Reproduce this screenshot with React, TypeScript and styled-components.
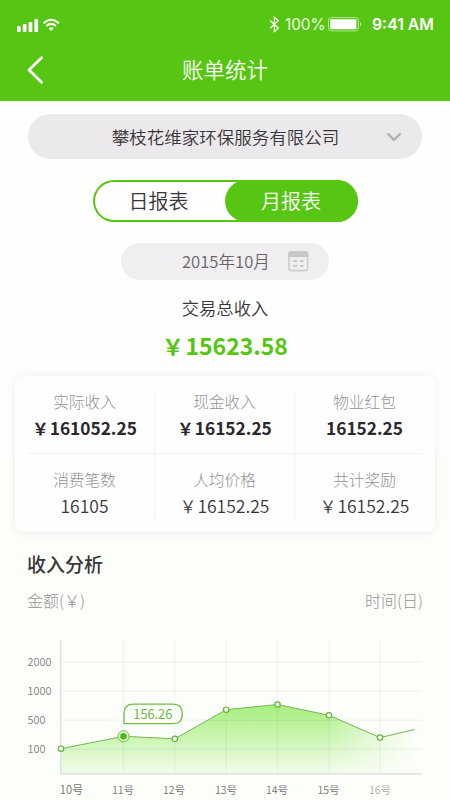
import React from "react";
import styled, { createGlobalStyle } from "styled-components";

const GREEN = "#56c612";
const CJK = '"Noto Sans CJK SC", "Noto Sans", sans-serif';

const GlobalStyle = createGlobalStyle`
  * { box-sizing: border-box; }
  body { margin: 0; background: #fefefe; }
`;

const Screen = styled.main`
  width: 450px;
  height: 800px;
  overflow: hidden;
  font-family: ${CJK};
  color: #39363a;
  background: linear-gradient(#fefefe 454px, #fcfef9 454px);
`;

const Header = styled.header`
  height: 101px;
  background: ${GREEN};
  color: #fff;
`;

const StatusBar = styled.div`
  display: flex;
  align-items: center;
  justify-content: space-between;
  height: 49px;
  padding: 0 15px 0 17px;
`;

const StatusGroup = styled.div`
  display: flex;
  align-items: center;
  font-family: Inter, "Liberation Sans", sans-serif;
`;

const Percent = styled.span`
  margin: 1px 3px 0 5px;
  width: 40px;
  font-size: 15.4px;
  line-height: 20px;
  letter-spacing: -0.1px;
  white-space: nowrap;
  color: #effbe8;
`;

const Clock = styled.span`
  margin: 1px 0 0 10px;
  width: 63px;
  font-size: 15.8px;
  font-weight: 600;
  line-height: 20px;
  white-space: nowrap;
`;

const NavBar = styled.div`
  display: grid;
  grid-template-columns: 60px 1fr 60px;
  align-items: center;
  height: 42px;
`;

const BackButton = styled.button`
  display: flex;
  padding: 0 0 0 26px;
  border: 0;
  background: none;
  color: #fff;
`;

const Title = styled.h1`
  margin: 0;
  font-size: 21.5px;
  font-weight: 350;
  line-height: 38px;
  text-align: center;
  padding-bottom: 2px;
`;

const Filters = styled.section`
  display: flex;
  flex-direction: column;
  align-items: center;
  padding-top: 13px;
`;

const CompanySelect = styled.div`
  display: grid;
  grid-template-columns: 56px 1fr 56px;
  align-items: center;
  justify-items: center;
  width: 394px;
  height: 45px;
  border-radius: 23px;
  background: #ebe9eb;
  font-size: 17.5px;
  font-weight: 350;
  line-height: 44px;
`;

const Company = styled.span`
  grid-column: 2;
  padding-left: 1px;
`;

const Segmented = styled.div`
  display: flex;
  width: 265px;
  height: 42px;
  margin-top: 21px;
  border-radius: 21px;
  box-shadow: inset 0 0 0 2px ${GREEN};
`;

const Segment = styled.button<{ $active?: boolean }>`
  width: ${(p) => (p.$active ? "133px" : "132px")};
  height: 42px;
  padding: 0;
  border: 0;
  border-radius: 21px;
  background: ${(p) => (p.$active ? GREEN : "transparent")};
  color: ${(p) => (p.$active ? "#fff" : "#39363a")};
  font: 350 20px/42px ${CJK};
`;

const MonthPicker = styled.div`
  display: flex;
  align-items: center;
  justify-content: space-between;
  width: 208px;
  height: 37px;
  margin-top: 21px;
  padding: 0 20px 0 61px;
  border-radius: 19px;
  background: #f0eef0;
  color: #69666a;
  font-size: 16.6px;
  font-weight: 350;
  line-height: 34px;

  span { padding-bottom: 2px; }
`;

const Total = styled.section`
  text-align: center;
`;

const TotalLabel = styled.div`
  padding-top: 13px;
  font-size: 17.3px;
  font-weight: 350;
  line-height: 30px;
`;

const TotalAmount = styled.div`
  height: 53px;
  color: ${GREEN};
  font-size: 23px;
  font-weight: 700;
  line-height: 45px;
`;

const Yen = styled.span`
  margin-right: 0.07em;
  font-size: 0.95em;
`;

const StatsCard = styled.section`
  width: 420px;
  height: 156px;
  margin: 0 15px;
  border-radius: 8px;
  background: #fefefe;
  box-shadow: 0 0 8px rgba(90, 50, 110, 0.09);
`;

const StatsRow = styled.div<{ $strong?: boolean }>`
  display: grid;
  grid-template-columns: repeat(3, 140px);
  height: 77px;
  padding: ${(p) => (p.$strong ? "16px 0 0" : "0 0 16px")};
`;

const Divider = styled.hr`
  height: 1px;
  margin: 0 14px;
  border: 0;
  background: #f3f2f3;
`;

const Stat = styled.div<{ $strong?: boolean }>`
  display: flex;
  flex-direction: column;
  align-items: center;
  padding: ${(p) => (p.$strong ? "1px 1px 0 0" : "17px 1px 0 0")};
  font-size: ${(p) => (p.$strong ? "17.3px" : "17.5px")};
  font-weight: ${(p) => (p.$strong ? 700 : 350)};
  color: ${(p) => (p.$strong ? "#2b282c" : "#39363a")};
  line-height: 26px;
  white-space: nowrap;
  box-shadow: inset -1px 0 0 #f5f4f5;
  &:last-child { box-shadow: none; }
`;

const StatLabel = styled.span`
  height: 24px;
  margin-top: -2px;
  color: #959296;
  font-size: 15.7px;
  font-weight: 300;
  line-height: 22px;
`;

const Analysis = styled.section`
  padding: 17px 27px 0;
`;

const SectionTitle = styled.h2`
  margin: 0;
  font-size: 19px;
  font-weight: 500;
  color: #39363a;
  line-height: 30px;
`;

const AxisTitles = styled.div`
  display: flex;
  justify-content: space-between;
  margin-top: 9px;
  color: #959296;
  font-size: 16px;
  font-weight: 300;
  line-height: 24px;
`;

const Chart = styled.svg`
  display: block;
  width: 450px;
  height: 172px;
  margin: 16px 0 0 -27px;
  font-family: ${CJK};
  font-weight: 350;
`;

const primaryStats = [
  { label: "实际收入", value: "161052.25", yen: true },
  { label: "现金收入", value: "16152.25", yen: true },
  { label: "物业红包", value: "16152.25", yen: false },
];

const secondaryStats = [
  { label: "消费笔数", value: "16105", yen: false },
  { label: "人均价格", value: "16152.25", yen: true },
  { label: "共计奖励", value: "16152.25", yen: true },
];

const yTicks = [
  { text: "2000", y: 34 },
  { text: "1000", y: 63 },
  { text: "500", y: 92 },
  { text: "100", y: 121 },
];

const points = [
  { day: "10号", x: 61, y: 120.7, label: 71.5 },
  { day: "11号", x: 123.5, y: 108.3, label: 123 },
  { day: "12号", x: 174.8, y: 110.8, label: 174 },
  { day: "13号", x: 226.2, y: 81.7, label: 226 },
  { day: "14号", x: 277.5, y: 76.5, label: 277 },
  { day: "15号", x: 329, y: 87.3, label: 328.5 },
  { day: "16号", x: 380, y: 109.6, label: 380 },
];

const line = points.map((p) => `${p.x},${p.y}`).join(" ") + " 414.5,101.5";

function SignalIcon() {
  return (
    <svg width="43" height="16" viewBox="0 0 43 16" fill="#fff">
      <rect x="0" y="9" width="3.7" height="6" rx="1" />
      <rect x="5.8" y="7" width="3.7" height="8" rx="1" />
      <rect x="11.6" y="5" width="3.7" height="10" rx="1" />
      <rect x="17.4" y="2" width="3.7" height="13" rx="1" />
      <g fill="none" stroke="#fff" strokeWidth="2">
        <path d="M26.6 6.3Q34.2-.8 41.8 6.3" />
        <path d="M29.4 9Q34.2 4.8 39 9" />
      </g>
      <path d="M31.7 11.2Q34.2 9.2 36.7 11.2L34.2 13.9Z" />
    </svg>
  );
}

function BluetoothIcon() {
  return (
    <svg width="11" height="17" viewBox="0 0 11 17" fill="none" stroke="#fff" strokeWidth="1.2">
      <path d="M1 4.5 9.3 12 5.3 15.6V1.2L9.3 4.8 1 12.2" />
    </svg>
  );
}

function BatteryIcon() {
  return (
    <svg width="34" height="15" viewBox="0 0 34 15">
      <rect x="0.5" y="0.5" width="30" height="13.4" rx="3" fill="none" stroke="#fff" strokeOpacity="0.55" />
      <rect x="2.2" y="2.3" width="26.3" height="10" rx="1.2" fill="#fff" />
      <path d="M32 5Q34.6 7.2 32 9.5Z" fill="#fff" fillOpacity="0.55" />
    </svg>
  );
}

function CalendarIcon() {
  return (
    <svg width="21" height="21" viewBox="0 0 21 21">
      <rect x="1" y="1" width="18.6" height="18.6" rx="2.5" fill="#f0eef0" stroke="#ceccce" strokeWidth="1.6" />
      <path d="M.2 6V3Q.2.2 3 .2H17.6Q20.4.2 20.4 3V6Z" fill="#c9c7c9" />
      <path d="M5.4 10.2H9M12 10.2H15.6M5.4 14.8H9M12 14.8H15.6" stroke="#c6c4c6" strokeWidth="1.8" />
    </svg>
  );
}

function IncomeChart() {
  return (
    <Chart viewBox="0 0 450 172">
      <defs>
        <linearGradient id="area" gradientUnits="userSpaceOnUse" x1="0" y1="76" x2="0" y2="146">
          <stop offset="0" stopColor="#a5ee7c" />
          <stop offset="1" stopColor="#a5ee7c" stopOpacity="0.1" />
        </linearGradient>
        <linearGradient id="fade" gradientUnits="userSpaceOnUse" x1="61" y1="0" x2="415" y2="0">
          <stop offset="0" stopColor="#fff" />
          <stop offset="0.75" stopColor="#fff" />
          <stop offset="1" stopColor="#fff" stopOpacity="0" />
        </linearGradient>
        <mask id="edge">
          <rect x="61" y="70" width="354" height="76" fill="url(#fade)" />
        </mask>
      </defs>
      <polygon points={`61,146 ${line} 414.5,146`} fill="url(#area)" mask="url(#edge)" />
      <g stroke="#786e82" strokeOpacity="0.065" strokeWidth="1.4">
        {yTicks.map((t) => (
          <path key={t.text} d={`M61 ${t.y + 0.3}H421.5`} />
        ))}
        {points.slice(1).map((p) => (
          <path key={p.day} d={`M${p.x} 12V146`} />
        ))}
      </g>
      <path d="M60.7 12V145.8H421.5" fill="none" stroke="#dedfdf" strokeWidth="1.5" />
      <polyline points={line} fill="none" stroke="#75b653" strokeWidth="1" />
      {points.map((p, i) =>
        i === 1 ? (
          <g key={p.day}>
            <circle cx={p.x} cy={p.y} r="5.6" fill="#e3f8d7" stroke="#67c338" strokeWidth="1" />
            <circle cx={p.x} cy={p.y} r="3.3" fill="#4fb51c" />
          </g>
        ) : (
          <circle key={p.day} cx={p.x} cy={p.y} r="2.7" fill="#f4fdec" stroke="#68b23d" strokeWidth="1.2" />
        ),
      )}
      <path
        d="M124 95.7V85.5Q124 76.2 133.5 76.2H173Q182.3 76.2 182.3 86T173 95.7Z"
        fill="#fcfef9"
        stroke="#70bd48"
        strokeWidth="1.3"
      />
      <text x="152.8" y="90.8" textAnchor="middle" fontSize="12.9" fill="#5fb12e">156.26</text>
      <g fontSize="10.9" fill="#858386">
        {yTicks.map((t) => (
          <text key={t.text} x="27.5" y={t.y + 4.3}>{t.text}</text>
        ))}
      </g>
      <g textAnchor="middle" fill="#777578">
        {points.map((p, i) => (
          <text key={p.day} x={p.label} y="165.7" fontSize={i === 0 ? 11.2 : 10.6} fill={i === 6 ? "#aeacae" : undefined}>
            {p.day}
          </text>
        ))}
      </g>
    </Chart>
  );
}

export default function App() {
  return (
    <Screen>
      <GlobalStyle />
      <Header>
        <StatusBar>
          <SignalIcon />
          <StatusGroup>
            <BluetoothIcon />
            <Percent>100%</Percent>
            <BatteryIcon />
            <Clock>9:41 AM</Clock>
          </StatusGroup>
        </StatusBar>
        <NavBar>
          <BackButton aria-label="返回">
            <svg width="18" height="28" viewBox="0 0 18 28" fill="none" stroke="currentColor" strokeWidth="2.8" strokeLinecap="round" strokeLinejoin="round">
              <path d="M15.5 1.8 3 14 15.5 26.2" />
            </svg>
          </BackButton>
          <Title>账单统计</Title>
        </NavBar>
      </Header>
      <Filters>
        <CompanySelect>
          <Company>攀枝花维家环保服务有限公司</Company>
          <svg width="16" height="10" viewBox="0 0 16 10" fill="none" stroke="#b1afb1" strokeWidth="2.4">
            <path d="M1.5 1.5 8 7.8 14.5 1.5" />
          </svg>
        </CompanySelect>
        <Segmented>
          <Segment>日报表</Segment>
          <Segment $active>月报表</Segment>
        </Segmented>
        <MonthPicker>
          <span>2015年10月</span>
          <CalendarIcon />
        </MonthPicker>
      </Filters>
      <Total>
        <TotalLabel>交易总收入</TotalLabel>
        <TotalAmount><Yen>￥</Yen>15623.58</TotalAmount>
      </Total>
      <StatsCard>
        <StatsRow $strong>
          {primaryStats.map((s) => (
            <Stat key={s.label} $strong>
              <StatLabel>{s.label}</StatLabel>
              <span>{s.yen && <Yen>￥</Yen>}{s.value}</span>
            </Stat>
          ))}
        </StatsRow>
        <Divider />
        <StatsRow>
          {secondaryStats.map((s) => (
            <Stat key={s.label}>
              <StatLabel>{s.label}</StatLabel>
              <span>{s.yen && <Yen>￥</Yen>}{s.value}</span>
            </Stat>
          ))}
        </StatsRow>
      </StatsCard>
      <Analysis>
        <SectionTitle>收入分析</SectionTitle>
        <AxisTitles>
          <span>金额(￥)</span>
          <span>时间(日)</span>
        </AxisTitles>
        <IncomeChart />
      </Analysis>
    </Screen>
  );
}
